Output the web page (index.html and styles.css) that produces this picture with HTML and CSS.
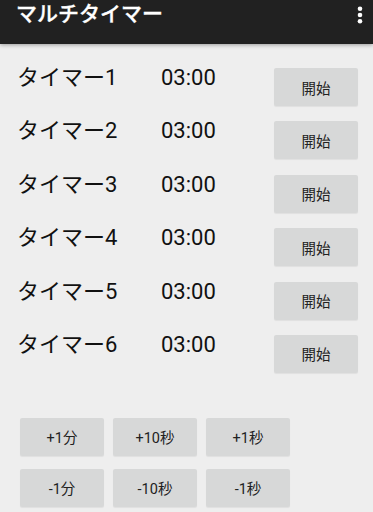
FILE: index.html
```html
<!DOCTYPE html>
<html lang="ja">
<head>
    <meta charset="UTF-8">
    <meta name="viewport" content="width=device-width, initial-scale=1.0">
    <link rel="stylesheet" href="styles.css">
</head>
<body>
    <header class="actionBar">
        <h1>マルチタイマー</h1>
        <svg class="overflow" width="6" height="19" viewBox="0 0 6 19">
            <circle cx="3" cy="2.7" r="2.3" fill="#fff"/>
            <circle cx="3" cy="9" r="2.3" fill="#fff"/>
            <circle cx="3" cy="15.3" r="2.3" fill="#fff"/>
        </svg>
    </header>

    <section class="timers">
        <div class="timer">
            <span class="name">タイマー1</span>
            <span class="time">03:00</span>
            <button class="btn start">開始</button>
        </div>
        <div class="timer">
            <span class="name">タイマー2</span>
            <span class="time">03:00</span>
            <button class="btn start">開始</button>
        </div>
        <div class="timer">
            <span class="name">タイマー3</span>
            <span class="time">03:00</span>
            <button class="btn start">開始</button>
        </div>
        <div class="timer">
            <span class="name">タイマー4</span>
            <span class="time">03:00</span>
            <button class="btn start">開始</button>
        </div>
        <div class="timer">
            <span class="name">タイマー5</span>
            <span class="time">03:00</span>
            <button class="btn start">開始</button>
        </div>
        <div class="timer">
            <span class="name">タイマー6</span>
            <span class="time">03:00</span>
            <button class="btn start">開始</button>
        </div>
    </section>

    <section class="adjust">
        <button class="btn">+1分</button>
        <button class="btn">+10秒</button>
        <button class="btn">+1秒</button>
        <button class="btn">-1分</button>
        <button class="btn">-10秒</button>
        <button class="btn">-1秒</button>
    </section>
</body>
</html>
```

FILE: styles.css
```css
body {
	background-color: #eeeeee;
	margin: 0;
	padding: 0;
	font-family: Roboto, "Noto Sans CJK JP", sans-serif;
	color: #111;
	height: 512px;
	overflow: hidden;
}

.actionBar {
	background-color: #212121;
	height: 44px;
	display: flex;
	justify-content: space-between;
	align-items: flex-start;
	padding: 0 10px 0 16px;
	box-shadow: 0 1px 4px rgba(0, 0, 0, 0.35);
	position: relative;
}

.actionBar > h1 {
	color: #fff;
	font-size: 21px;
	font-weight: 500;
	line-height: 29px;
	margin: 0;
	-webkit-text-stroke: 0.3px #fff;
}

.actionBar > .overflow {
	margin-top: 6.3px;
}

.timers {
	display: flex;
	flex-direction: column;
	gap: 15.4px;
	padding: 24px 15px 0 17px;
}

.timer {
	display: flex;
	align-items: flex-start;
	height: 38px;
}

.timer > .name,
.timer > .time {
	font-size: 22px;
	line-height: 20px;
	white-space: nowrap;
}

.timer > .name {
	width: 144px;
}

.timer > .time {
	flex: 1;
}

.btn {
	background-color: #d7d8d8;
	border: none;
	border-radius: 2px;
	box-shadow: 0 1px 1px rgba(0, 0, 0, 0.06);
	width: 84px;
	height: 38px;
	padding: 0;
	font-family: Roboto, "Noto Sans CJK JP", sans-serif;
	font-size: 14.5px;
	color: #222;
}

.adjust {
	display: grid;
	grid-template-columns: repeat(3, 84px);
	column-gap: 9px;
	row-gap: 13px;
	padding: 45px 0 0 20px;
}
```
